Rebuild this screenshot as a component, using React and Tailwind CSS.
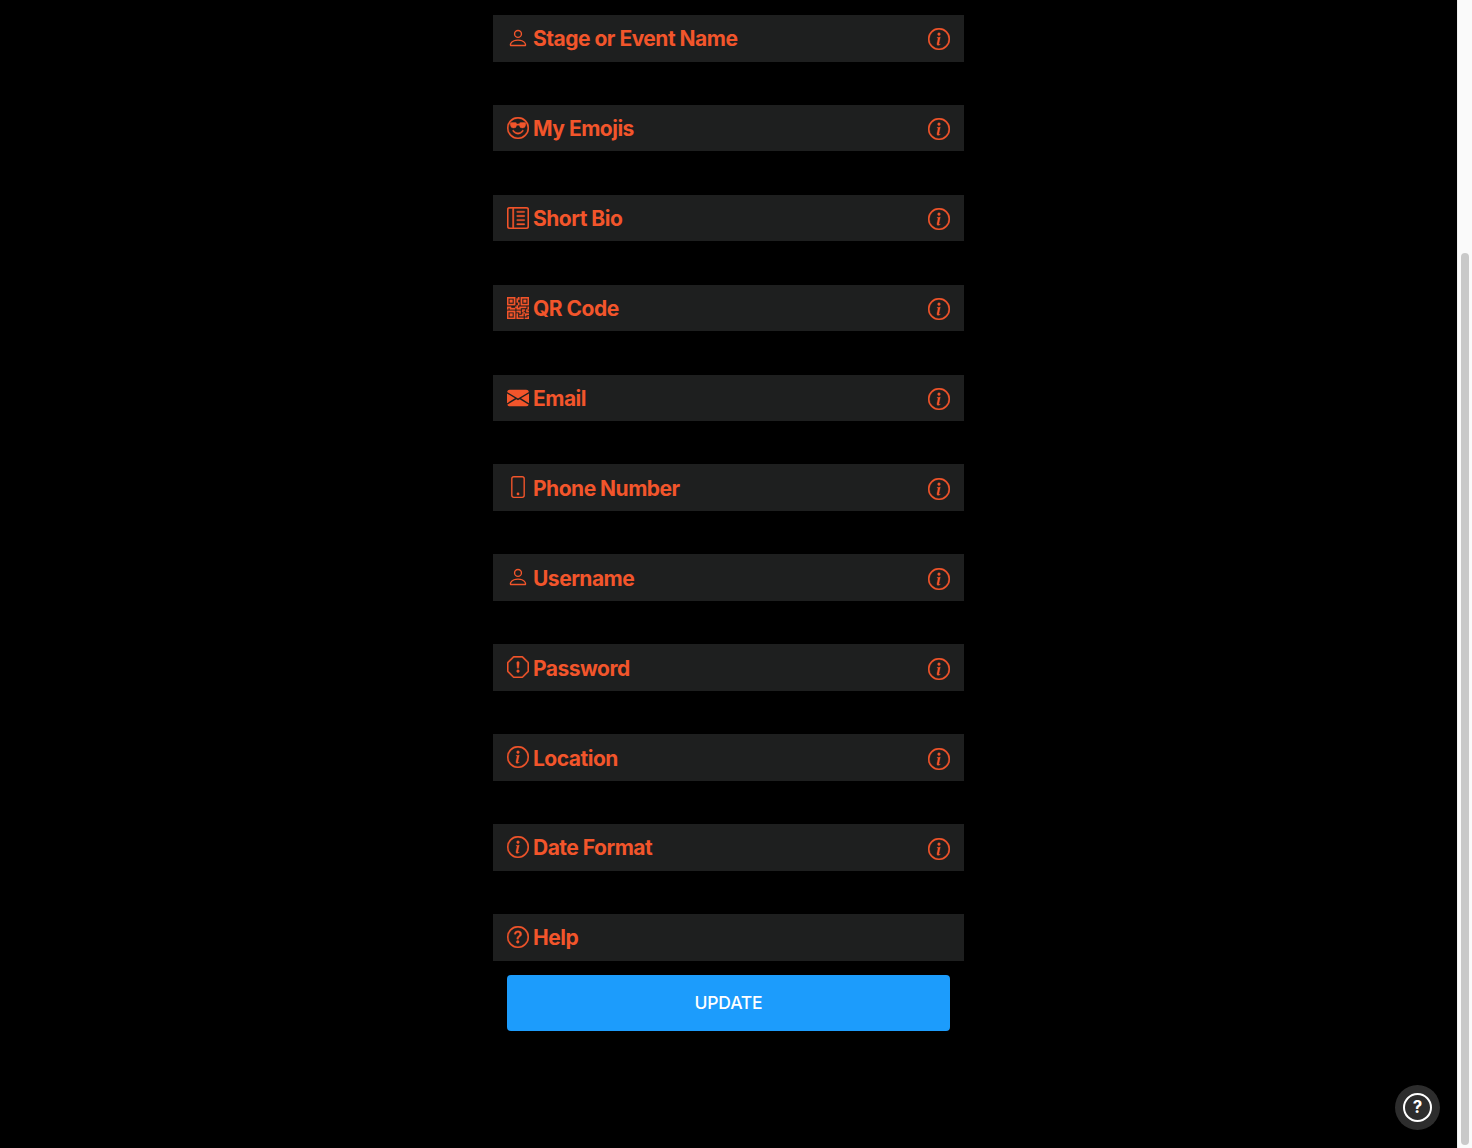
import React from 'react';
import {
  BsPerson, BsEmojiSunglasses, BsLayoutTextSidebarReverse, BsQrCode, BsEnvelopeFill,
  BsPhone, BsExclamationOctagon, BsInfoCircle, BsQuestionCircle,
} from 'react-icons/bs';

const rows = [
  { label: 'Stage or Event Name', icon: BsPerson, stroke: 0 },
  { label: 'My Emojis', icon: BsEmojiSunglasses, stroke: 0.25 },
  { label: 'Short Bio', icon: BsLayoutTextSidebarReverse, stroke: 0.25 },
  { label: 'QR Code', icon: BsQrCode, stroke: 0.25 },
  { label: 'Email', icon: BsEnvelopeFill, stroke: 0 },
  { label: 'Phone Number', icon: BsPhone, stroke: 0 },
  { label: 'Username', icon: BsPerson, stroke: 0 },
  { label: 'Password', icon: BsExclamationOctagon, stroke: 0.25 },
  { label: 'Location', icon: BsInfoCircle, stroke: 0.25 },
  { label: 'Date Format', icon: BsInfoCircle, stroke: 0.25 },
  { label: 'Help', icon: BsQuestionCircle, stroke: 0.25, noInfo: true },
];

const Row = ({ label, icon: Icon, stroke, noInfo }) => (
  <div className="h-[46.6px] w-[471px] flex items-center justify-between px-[14px] bg-[#1e1f1f] text-[#f2552b]">
    <div className="flex items-center gap-[4px]">
      <Icon size={22} strokeWidth={stroke} className="shrink-0 -mt-[0.5px]" />
      <span className="text-[21px] leading-[30px] font-bold tracking-[-0.5px] mt-[2.3px]">{label}</span>
    </div>
    {!noInfo && <BsInfoCircle size={22} strokeWidth={0.25} className="shrink-0 mt-[2.4px]" />}
  </div>
);

export default function App() {
  return (
    <div className="relative flex h-[1148px] overflow-hidden bg-black font-['Inter',sans-serif]">
      <main className="flex-1 flex flex-col items-center pt-[15px]">
        <div className="flex flex-col gap-[43.3px]">
          {rows.map((r) => <Row key={r.label} {...r} />)}
        </div>
        <button className="mt-[14px] h-[56px] w-[443px] rounded-[4px] bg-[#1c9cfc] text-white text-[17.5px] font-medium tracking-[-0.2px] pt-[2px]">
          UPDATE
        </button>
      </main>
      <aside className="w-[15px] bg-[#fafafa] border-l border-[#efefef] pt-[253px] pb-[3px] flex justify-center">
        <div className="w-[8px] h-full rounded-full bg-[#c9c9c9]" />
      </aside>
      <button className="absolute left-[1395px] top-[1085px] w-[45px] h-[45px] rounded-full bg-[#2d2d2d] flex items-center justify-center">
        <span className="w-[29px] h-[29px] rounded-full border-2 border-white flex items-center justify-center text-white text-[17px] font-bold leading-none">?</span>
      </button>
    </div>
  );
}
